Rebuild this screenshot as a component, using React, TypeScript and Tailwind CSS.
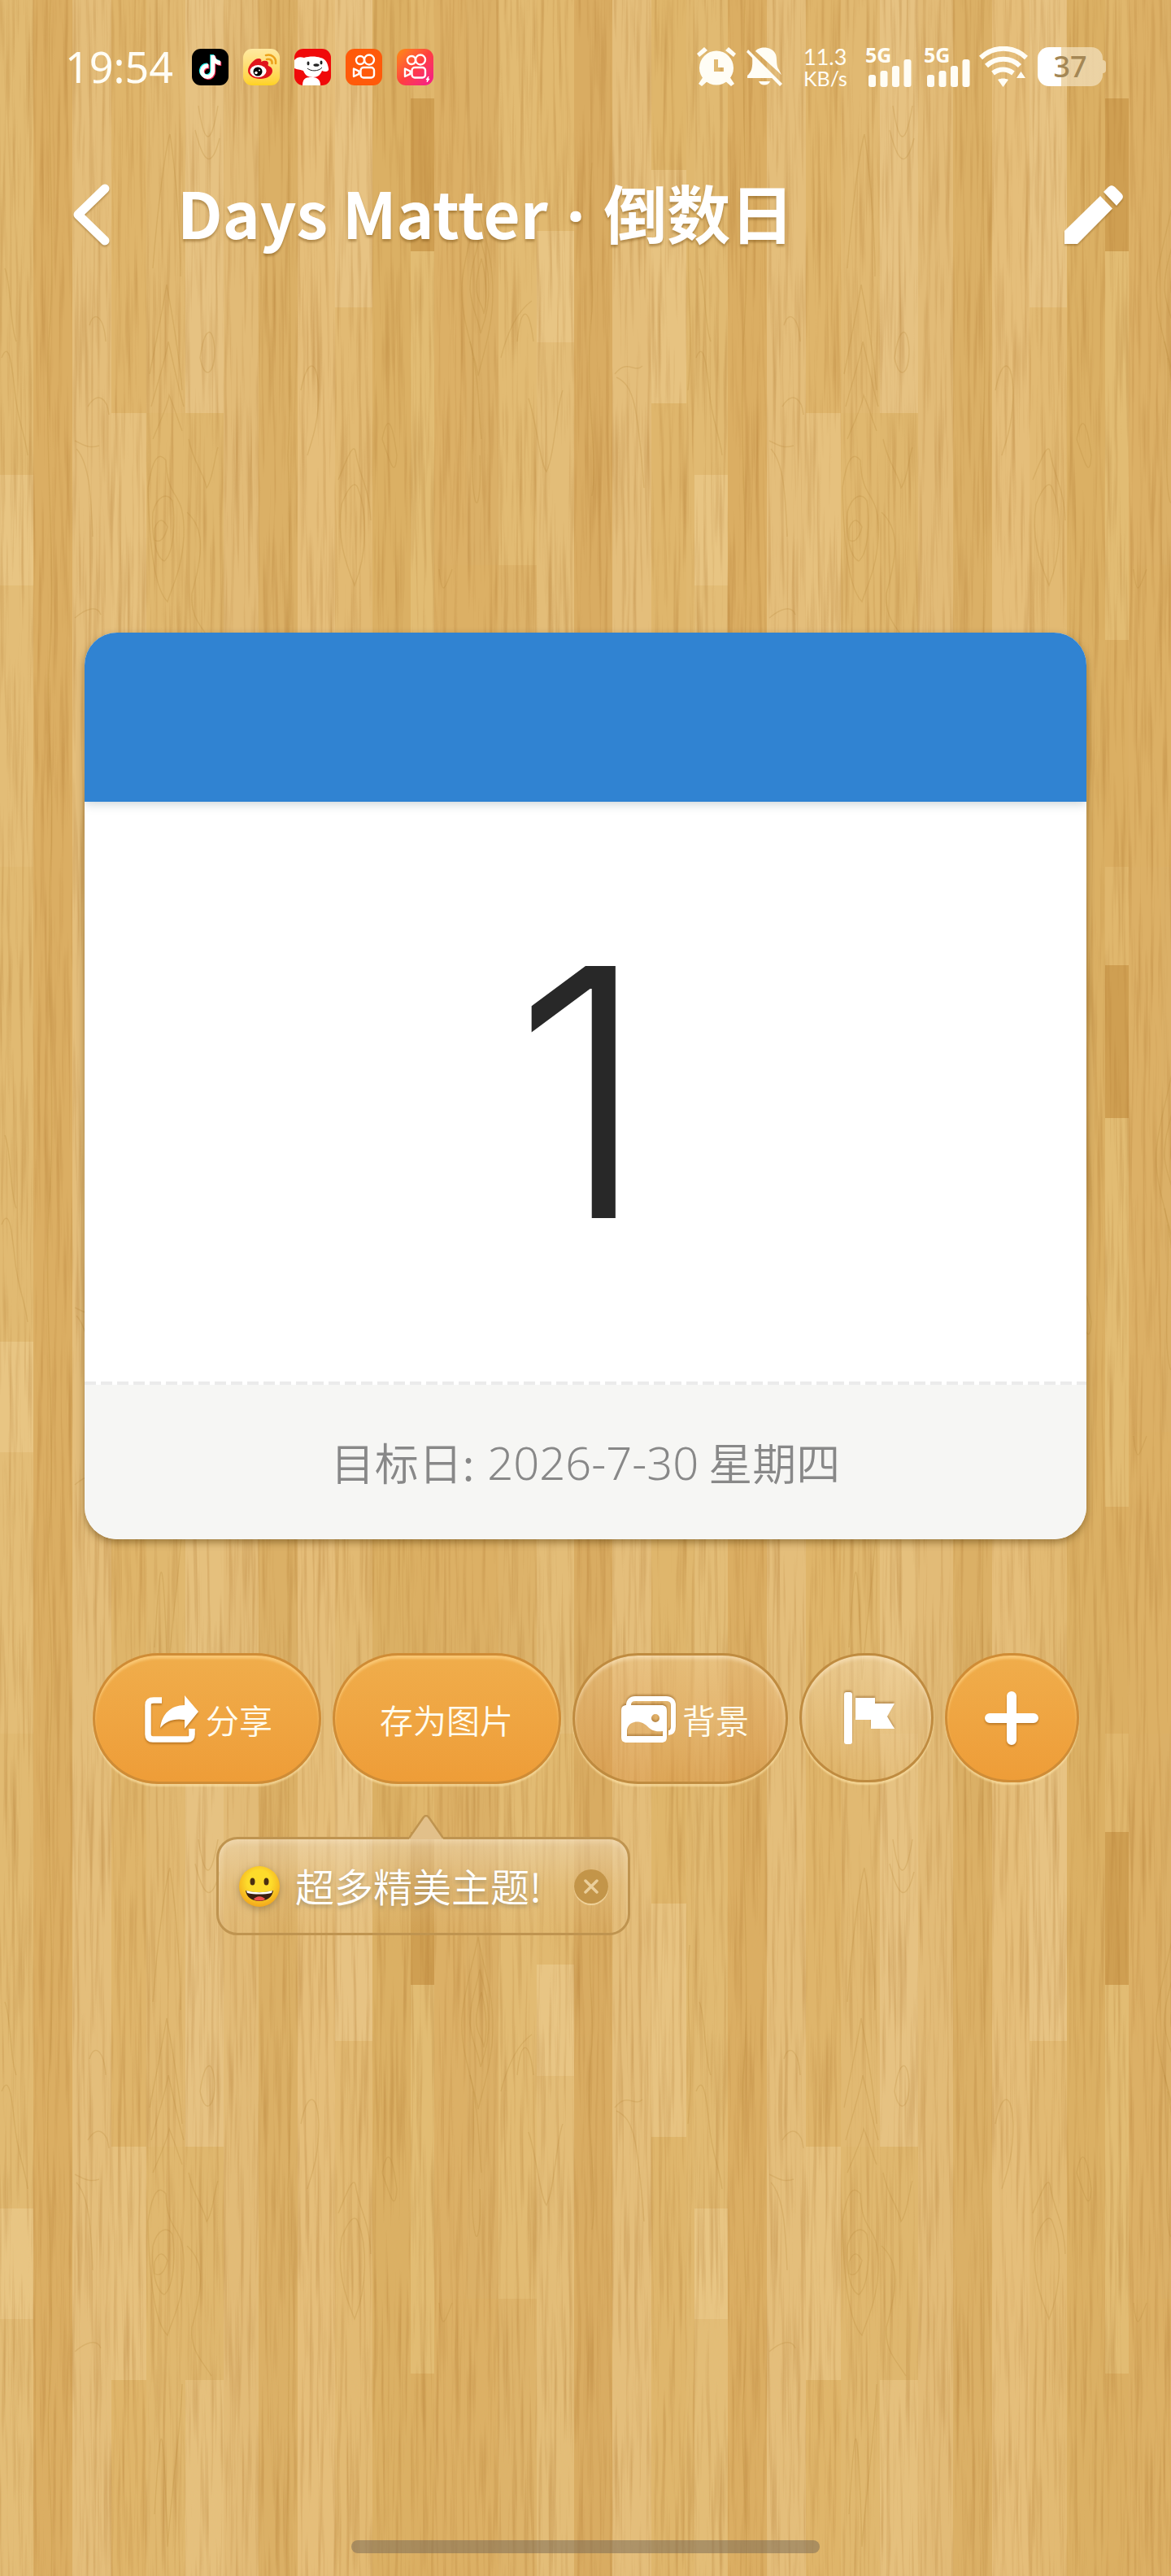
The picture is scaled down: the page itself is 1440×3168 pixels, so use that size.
import { ReactNode } from "react";
import { FaTiktok } from "react-icons/fa6";
import clsx from "clsx";

// [x, y, width, height, fill]
type Plank = [number, number, number, number, string];

const planks: Plank[] = [
    [0, 0, 41, 584, "#e1ba72"],
    [0, 584, 41, 136, "#e8c583"],
    [0, 720, 41, 346, "#e3bd77"],
    [41, 0, 48, 1066, "#dbae63"],
    [89, 0, 48, 1066, "#e4be7b"],
    [137, 0, 43, 508, "#dfb56b"],
    [137, 508, 43, 287, "#e6c17e"],
    [137, 795, 43, 271, "#dfb56a"],
    [180, 0, 48, 508, "#e1b972"],
    [180, 508, 48, 558, "#e0b86f"],
    [228, 0, 47, 508, "#e6c282"],
    [228, 508, 47, 287, "#dfb76e"],
    [228, 795, 47, 271, "#e5c07d"],
    [275, 0, 43, 1066, "#e2bb77"],
    [318, 0, 48, 1066, "#dbb066"],
    [366, 0, 46, 1066, "#e5be7a"],
    [412, 0, 46, 378, "#e7c383"],
    [412, 378, 46, 688, "#e2ba73"],
    [458, 0, 47, 1066, "#dbb064"],
    [505, 0, 29, 121, "#e0b76d"],
    [505, 121, 29, 188, "#cf9f52"],
    [505, 309, 29, 478, "#e2bc73"],
    [505, 787, 29, 279, "#dbaf63"],
    [534, 0, 40, 695, "#dcb066"],
    [574, 0, 39, 695, "#dbb067"],
    [534, 695, 79, 371, "#dcb065"],
    [613, 0, 47, 695, "#e2bb73"],
    [613, 695, 47, 371, "#ddb36a"],
    [660, 0, 46, 284, "#e1b970"],
    [660, 284, 46, 137, "#e8c584"],
    [660, 421, 46, 645, "#e3bd78"],
    [706, 0, 47, 1066, "#d9ac62"],
    [753, 0, 48, 1066, "#e4be7b"],
    [801, 0, 43, 209, "#dfb66b"],
    [801, 209, 43, 287, "#e7c381"],
    [801, 496, 43, 570, "#dfb66c"],
    [844, 0, 10, 1066, "#e0b86f"],
];

const grain = [
    // knot
    "M588 250 C580 290 570 320 568 350 C566 390 580 420 588 462 C596 430 606 400 606 360 C606 310 594 290 588 250",
    "M590 290 C584 320 578 330 578 356 C580 380 588 390 591 410 C598 390 602 370 601 350 C600 320 594 310 590 290",
    "M592 318 C586 340 585 350 586 358 C588 372 594 376 595 386 C600 366 598 340 592 318",
    "M582 440 C584 520 578 560 582 600 C586 640 592 610 590 560",
    "M578 420 C590 470 588 500 592 540",
    // arches
    "M184 460 C192 420 200 380 205 350 C212 390 220 430 224 480",
    "M186 500 C194 470 204 440 207 420 C214 450 220 480 226 500",
    "M188 540 C196 520 206 500 208 486 C214 500 220 520 224 530",
    "M188 330 C194 250 204 180 209 165 C216 210 222 290 222 340",
    "M190 960 C196 860 200 800 206 1000 C214 900 222 860 224 800",
    "M182 600 C188 560 196 556 204 566 C206 620 228 600 226 660 C224 700 212 720 206 740 C196 730 184 700 182 600",
    "M188 630 C194 608 206 606 212 616 C216 640 214 680 202 690 C192 686 186 660 188 630",
    "M190 650 C196 634 202 640 206 648 C202 664 196 668 190 664 Z",
    "M232 540 C238 570 250 580 254 600 C262 590 264 560 268 550",
    "M230 630 C252 650 250 680 236 730 C234 760 248 770 260 790",
    "M246 440 C252 400 262 400 264 430 C264 460 252 470 246 440",
    "M244 130 C250 170 258 190 268 130",
    "M240 160 C250 200 260 210 270 170",
    "M420 620 C428 600 436 590 440 600 C452 630 452 680 436 720 C424 690 414 660 420 620",
    "M416 590 C428 560 436 540 438 560 C444 590 454 600 456 640",
    "M370 480 C378 440 390 440 392 480 C392 520 384 540 378 560",
    "M616 440 C626 400 640 380 654 370",
    "M650 490 C660 520 664 570 672 580 C682 560 684 500 692 480",
    "M636 420 C640 380 650 370 656 420",
    "M756 460 C772 440 780 460 790 450 M758 464 C780 474 784 500 792 600",
    "M92 542 C104 548 110 552 122 548 M94 552 C110 570 112 610 114 660",
    "M92 760 C106 748 120 744 124 756",
    "M2 440 C10 420 14 440 18 480 C22 520 30 530 34 560",
    "M6 330 C14 350 12 400 20 420",
    "M110 400 C116 380 128 390 130 420 M108 500 C120 480 132 490 134 510",
    "M470 540 C478 500 484 530 488 560 C486 590 480 570 470 540",
    "M540 700 C544 740 548 720 556 700",
    "M62 0 C56 160 70 300 60 420 C54 560 70 700 60 820 C56 900 68 960 62 1066",
    "M356 0 C350 200 362 420 354 560 C360 700 350 900 356 1066",
    "M728 200 C720 320 734 350 726 400 C720 500 736 560 728 610",
    "M848 260 C842 340 854 400 846 480",
];

const Wood = () => (
    <svg className="[grid-area:1/1] w-full h-full" aria-hidden="true">
        <defs>
            <filter id="fine" x="0" y="0" width="100%" height="100%" colorInterpolationFilters="sRGB">
                <feTurbulence type="fractalNoise" baseFrequency="0.2 0.006" numOctaves="3" seed="7" />
                <feColorMatrix values="0 0 0 0 0.68  0 0 0 0 0.46  0 0 0 0 0.18  0.9 0 0 0 -0.42" />
            </filter>
            <pattern id="wood" width="854" height="1066" patternUnits="userSpaceOnUse">
                {planks.map(([x, y, w, h, fill]) => (
                    <rect key={`${x}-${y}`} x={x} y={y} width={w} height={h} fill={fill} />
                ))}
                {grain.map((d) => (
                    <path key={d} d={d} fill="none" stroke="#b98a3e" strokeOpacity="0.28" strokeWidth="1.5" />
                ))}
            </pattern>
        </defs>
        <rect width="100%" height="100%" fill="url(#wood)" />
        <rect width="100%" height="100%" filter="url(#fine)" />
    </svg>
);

const AppBadge = ({ className, children }: { className: string; children: ReactNode }) => (
    <span className={clsx("size-[45px] rounded-[11px] overflow-hidden flex items-center justify-center", className)}>
        {children}
    </span>
);

const KwaiMark = ({ spark }: { spark?: boolean }) => (
    <svg viewBox="0 0 45 45" className="size-full" fill="none" stroke="#fff" strokeWidth="2.4">
        <circle cx="18" cy="14" r="5" />
        <circle cx="29" cy="13.5" r="6" />
        <rect x="18.500" y="23" width="16.500" height="12.500" rx="3.500" />
        <path d="M10 24.500v9.500l6.500-3.200v-3.200z" strokeLinejoin="round" />
        {spark && <path d="M39 34l-3 4h2l-1 3 3-4h-2z" fill="#fff" strokeWidth="1" />}
    </svg>
);

const Signal = () => (
    <div className="flex flex-col w-[56px]">
        <span className="h-5 text-[25px] leading-5 font-bold">5G</span>
        <svg viewBox="0 0 54 34" className="w-[54px] h-[34px] ml-1 -mt-1" fill="currentColor">
            <rect x="0" y="19" width="9" height="15" rx="3" />
            <rect x="14.500" y="14" width="9" height="20" rx="3" />
            <rect x="29" y="8" width="9" height="26" rx="3" />
            <rect x="43.500" y="0" width="9" height="34" rx="3" />
        </svg>
    </div>
);

const StatusBar = () => (
    <div className="h-[164px] pl-20 pr-20 flex items-center justify-between text-[#fffdf5] font-['Noto_Sans',sans-serif]">
        <div className="flex items-center">
            <span className="w-[156px] text-[52px] leading-[56px]">19:54</span>
            <div className="flex gap-[18px]">
                <AppBadge className="bg-black">
                    <FaTiktok className="size-[29px] text-white [filter:drop-shadow(-1px_-1px_0_#25f4ee)_drop-shadow(1px_1px_0_#fe2c55)]" />
                </AppBadge>
                <AppBadge className="bg-linear-to-b from-[#ffe9a0] to-[#ffd21f]">
                    <svg viewBox="0 0 45 45" className="size-full">
                        <path d="M6 27C6 20 14 12 19 12c3 0 4 2 3 4 4-2 9-2 9 2 0 1-1 2 0 3 3 1 5 3 5 6 0 6-7 10-15 10S6 33 6 27z" fill="#e0141c" />
                        <ellipse cx="18.500" cy="27.500" rx="10" ry="7.500" fill="#fff" />
                        <circle cx="18" cy="28" r="5.500" fill="#000" />
                        <circle cx="16" cy="29.500" r="1.800" fill="#fff" />
                        <circle cx="20" cy="26.500" r="1" fill="#fff" />
                        <path d="M28 8c7-2 13 3 12 10M29 13c4-1 7 1 6.500 5" fill="none" stroke="#eda21c" strokeWidth="2.600" strokeLinecap="round" />
                    </svg>
                </AppBadge>
                <AppBadge className="bg-[#f00a0a]">
                    <svg viewBox="0 0 45 45" className="size-full">
                        <path d="M0 14c4-5 8-4 12-3 6-2 15-2 20 0 6 1 9 6 10 13 1 4-4 5-8 3-2 5-5 8-11 8-7 0-10-3-12-8-5-2-7-1-11-3z" fill="#fff" />
                        <path d="M10 45c0-10 6-10 11-10s11 1 11 10z" fill="#fff" />
                        <ellipse cx="17" cy="18" rx="1.500" ry="2.400" fill="#222" />
                        <ellipse cx="33" cy="17" rx="1.500" ry="2.400" fill="#222" />
                        <ellipse cx="27" cy="20" rx="3.600" ry="1.800" fill="#222" />
                        <path d="M16 24c4 4 14 4 18-1" fill="none" stroke="#222" strokeWidth="1" />
                    </svg>
                </AppBadge>
                <AppBadge className="bg-[#ff5a0a]"><KwaiMark /></AppBadge>
                <AppBadge className="bg-linear-135 from-[#ff8a00] via-[#ff3d3d] to-[#f5108c]"><KwaiMark spark /></AppBadge>
            </div>
        </div>

        <div className="flex items-center">
            <svg viewBox="0 0 50 50" className="size-[50px]" fill="currentColor">
                <path d="M9 37L3 46l4 3 8-7zM41 37l6 9-4 3-8-7z" />
                <path d="M1 9L10 1l4 4-10 8zM49 9L40 1l-4 4 10 8z" />
                <path fillRule="evenodd" d="M25 5.500a21 21 0 1 0 0 42 21 21 0 0 0 0-42zM22 16h5v10h7v5H22z" />
            </svg>
            <svg viewBox="0 0 46 50" className="w-[46px] h-[50px] ml-3" fill="currentColor">
                <path d="M11 6C15 0 31-1 36 10c2 6 0 14 4 19l3 6z" />
                <path d="M7 13l25 26H1v-3c5-5 7-9 6-23z" />
                <path d="M2 4l42 42-3 3L0 7z" />
                <path d="M15 43h14c-2 6-12 6-14 0z" />
            </svg>
            <div className="ml-6 w-[76px] flex flex-col font-['Lato',sans-serif]">
                <span className="text-[27px] leading-7">11.3</span>
                <span className="text-[25px] leading-6">KB/s</span>
            </div>
            <Signal />
            <div className="w-4" />
            <Signal />
            <svg viewBox="0 0 60 50" className="w-[60px] h-[50px] ml-3" fill="none" stroke="currentColor" strokeWidth="6">
                <path d="M2 14C18-1 42-1 58 14M9 24c12-11 30-11 41 0M17 33c8-6 17-6 25 0" />
                <path d="M23 41c4-2 9-2 13 0l-6.500 9z" fill="currentColor" stroke="none" />
                <path d="M46 39h11l-5.500-8z" fill="currentColor" stroke="none" />
            </svg>
            <div className="ml-3 flex items-center">
                <div className="w-[80px] h-12 rounded-[14px] bg-linear-to-r from-white from-36% to-[#f3e2c0]/70 to-36% flex items-center justify-center text-[36px] leading-9 font-medium text-[#a48755]">
                    37
                </div>
                <div className="w-1 h-4 rounded-r-sm bg-[#f3e2c0]/70" />
            </div>
        </div>
    </div>
);

const TitleBar = () => (
    <header className="h-[200px] pl-[86px] pr-[58px] flex items-start text-white">
        <button aria-label="返回" className="mt-[60px] [filter:drop-shadow(0_2px_1px_rgb(120_80_20/.4))]">
            <svg viewBox="0 0 50 80" className="w-[50px] h-20" fill="none" stroke="currentColor" strokeWidth="11" strokeLinecap="round" strokeLinejoin="round">
                <path d="M43 8L10 40l33 32" />
            </svg>
        </button>
        <h1 className="ml-[82px] mt-12 text-[78px] leading-[96px] font-bold whitespace-nowrap [text-shadow:0_3px_3px_rgb(120_80_20/.45)]">
            Days Matter<span className="mx-[3px] font-['Noto_Sans',sans-serif]"> · </span>倒数日
        </h1>
        <button aria-label="编辑" className="ml-auto mt-16 [filter:drop-shadow(0_2px_1px_rgb(120_80_20/.4))]">
            <svg viewBox="0 0 74 74" className="size-[74px]" fill="currentColor">
                <path d="M45 13l15 15.500L17 72H1V56z" />
                <path d="M49 8l6-6c3-2.500 5-2.500 8 0l8 8c2.500 3 2.500 5 0 8l-6 7z" />
            </svg>
        </button>
    </header>
);

const CountdownCard = () => (
    <section className="mt-[414px] mx-[104px] rounded-[40px] overflow-hidden bg-white shadow-[0_4px_10px_rgb(90_60_10/.5)]">
        <div className="h-[208px] relative bg-[#3083d2] shadow-[0_2px_12px_rgb(40_70_80/.25)]" />
        <p className="h-[713px] pr-3 flex items-center justify-center text-[426px] leading-none font-light text-[#282828] font-['Inter',sans-serif]">1</p>
        <div className="h-1 bg-[repeating-linear-gradient(90deg,#ebebeb_0_14px,#fff_14px_20px)]" />
        <p className="h-[190px] flex items-center justify-center bg-[#f6f6f4] text-[54px] leading-[60px] font-[350] text-[#888]">
            目标日:
            <span className="ml-4 mr-3 text-[56px] font-light font-['Noto_Sans',sans-serif]">2026-7-30</span>
            星期四
        </p>
    </section>
);

interface PillProps {
    className?: string;
    label?: string;
    solid?: boolean;
    children?: ReactNode;
}

const Pill = ({ className, label, solid, children }: PillProps) => (
    <button
        aria-label={label}
        className={clsx(
            "rounded-full border-[3px] flex items-center justify-center text-[41px] leading-[48px] font-[350] text-[#fffdf0]",
            solid
                ? "border-[#cf8c36] bg-linear-to-b from-[#f0ad4b] to-[#ee9d38] shadow-[inset_0_4px_3px_rgb(255_215_140/.6),0_3px_2px_rgb(255_230_170/.6)]"
                : "border-[#bf8b40] shadow-[inset_0_4px_4px_rgb(255_235_200/.55),0_3px_2px_rgb(255_230_170/.6)]",
            className
        )}
    >
        {children}
    </button>
);

const Actions = () => (
    <div className="mt-[140px] flex justify-center gap-[14px]">
        <Pill solid className="w-[281px] h-[161px] pl-1">
            <svg viewBox="0 0 68 60" className="w-[68px] h-[60px] mr-2 [filter:drop-shadow(0_2px_1px_rgb(140_80_10/.5))]">
                <path d="M22 7H12C7 7 5 9 5 13v36c0 4 2 6 6 6h42c5 0 6-2 6-6v-7" fill="none" stroke="#fff" strokeWidth="7.500" />
                <path d="M50 1l17 20-17 21V31C36 29 27 33 20 41c2-17 13-28 30-28z" fill="#fff" />
            </svg>
            分享
        </Pill>
        <Pill solid className="w-[281px] h-[161px]">存为图片</Pill>
        <Pill className="w-[265px] h-[161px] pl-3 bg-linear-to-b from-[#f0c88c]/40 to-[#d98f3c]/40">
            <svg viewBox="0 0 68 58" className="w-[68px] h-[58px] mr-2 [filter:drop-shadow(0_-2px_1px_rgb(140_90_30/.5))]" fill="none" stroke="#fff">
                <path d="M10 12c0-5 3-8 8-8h38c6 0 9 3 9 8v26c0 5-2 8-6 8" strokeWidth="6" />
                <path
                    fill="#fff"
                    stroke="none"
                    fillRule="evenodd"
                    d="M8 12h42c5 0 7 2 7 7v32c0 5-2 7-7 7H8c-5 0-7-2-7-7V19c0-5 2-7 7-7zM8 50h44v-6c-10 1-14-1-19-6-7-7-15-6-19-4s-6 6-6 10zM43 23a5 5 0 1 0 0 10 5 5 0 0 0 0-10z"
                />
            </svg>
            背景
        </Pill>
        <Pill label="置顶" className="w-[165px] h-[159px] pl-2 bg-linear-to-b from-[#f5dcb0]/50 to-[#e0b060]/20">
            <svg viewBox="0 0 64 66" className="w-16 h-[66px] [filter:drop-shadow(0_-2px_1px_rgb(140_90_30/.5))]" fill="#fff">
                <rect x="1" y="1" width="10" height="64" rx="3" />
                <path d="M15 8h24v7h24l-9 16 9 15H34V35H15z" />
            </svg>
        </Pill>
        <Pill solid label="添加" className="w-[165px] h-[159px]">
            <svg viewBox="0 0 66 66" className="size-[66px] [filter:drop-shadow(0_2px_1px_rgb(140_80_10/.5))]" stroke="#fff" strokeWidth="12" strokeLinecap="round">
                <path d="M33 6v54M6 33h54" />
            </svg>
        </Pill>
    </div>
);

const ThemeTip = () => (
    <div className="mt-[38px] ml-[266px] w-[509px]">
        {/* arrow covers the bubble's top border where the two meet */}
        <svg viewBox="0 0 42 30" className="relative block w-[42px] h-[30px] ml-[237px] -mb-[3px]">
            <path d="M0 28.500L17 4c2.500-4 5.500-4 8 0l17 24.500V30H0z" fill="#e2c08a" />
            <path d="M0 28.500L17 4c2.500-4 5.500-4 8 0l17 24.500" fill="none" stroke="#bf9450" strokeWidth="2.500" />
        </svg>
        <div className="h-[121px] pl-6 pr-6 flex items-center rounded-[26px] border-[3px] border-[#bf9450] bg-linear-to-b from-[#f0dcb8]/55 via-[#e8c890]/30 to-[#e0b468]/10 shadow-[inset_0_4px_6px_rgb(255_240_215/.3)]">
            <svg viewBox="0 0 52 52" className="size-[52px] [filter:drop-shadow(0_3px_4px_rgb(120_100_60/.5))]">
                <defs>
                    <radialGradient id="face" cx="0.5" cy="0.4" r="0.6">
                        <stop offset="0.5" stopColor="#fddb2b" />
                        <stop offset="1" stopColor="#f3a81c" />
                    </radialGradient>
                </defs>
                <circle cx="26" cy="26" r="25" fill="url(#face)" />
                <ellipse cx="17.500" cy="20" rx="3" ry="4.500" fill="#4a2f12" />
                <ellipse cx="34.500" cy="20" rx="3" ry="4.500" fill="#4a2f12" />
                <path d="M9 31c10 3 24 3 34 0-1 8-8 13-17 13S10 39 9 31z" fill="#3b2010" />
                <path d="M10 31c10 3 22 3 32 0l-1 3c-9 2-21 2-30 0z" fill="#fff" />
                <path d="M19 42c3-5 11-5 14 0-4 2-10 2-14 0z" fill="#f0524a" />
            </svg>
            <span className="ml-[18px] pb-1 text-[48px] leading-[60px] font-[350] text-white whitespace-nowrap [text-shadow:0_3px_5px_rgb(130_120_90/.55)]">
                超多精美主题!
            </span>
            <button
                aria-label="关闭"
                className="ml-auto size-[42px] rounded-full bg-[#c39549] flex items-center justify-center shadow-[0_2px_1px_rgb(255_235_190/.6)]"
            >
                <svg viewBox="0 0 18 18" className="size-[18px]" stroke="#ebcf9b" strokeWidth="3.500" strokeLinecap="round">
                    <path d="M2 2l14 14M16 2L2 16" />
                </svg>
            </button>
        </div>
    </div>
);

export default function App() {
    return (
        <div className="min-h-screen grid bg-[#e0b86f] font-['Noto_Sans_CJK_SC',sans-serif]">
            <Wood />
            <main className="[grid-area:1/1] flex flex-col">
                <StatusBar />
                <TitleBar />
                <CountdownCard />
                <Actions />
                <ThemeTip />
                <div className="mt-auto mb-7 mx-auto w-2/5 h-4 rounded-full bg-[#766856]/50" />
            </main>
        </div>
    );
}
